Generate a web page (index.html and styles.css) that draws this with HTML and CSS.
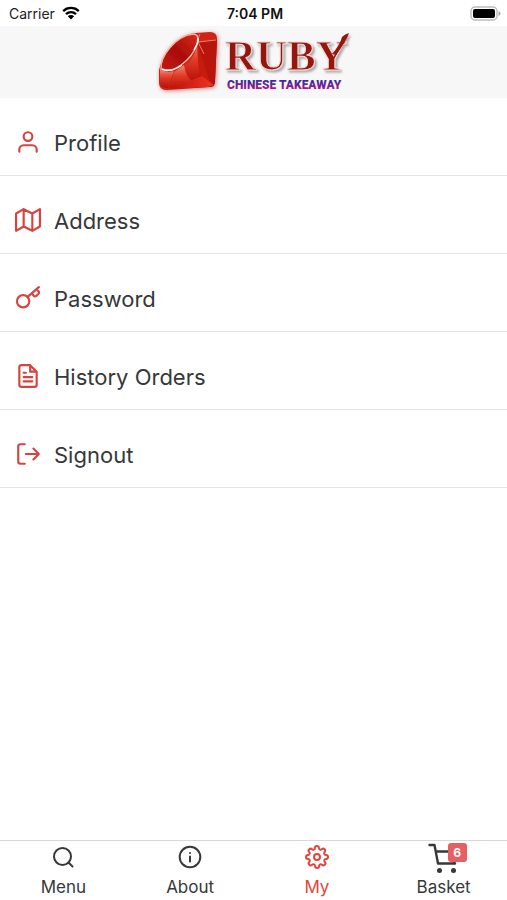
FILE: index.html
```html
<!DOCTYPE html>
<html lang="en">
<head>
<meta charset="utf-8">
<meta name="viewport" content="width=device-width, initial-scale=1">
<title>Ruby Chinese Takeaway</title>
<link rel="stylesheet" href="styles.css">
</head>
<body>
<div class="app">
  <div class="status">
    <div class="carrier">
      <span>Carrier</span>
      <svg class="wifi" viewBox="0 0 18 14" aria-hidden="true">
        <path d="M1.2 5.1a11.2 11.2 0 0 1 15.6 0M4 8.1a7.2 7.2 0 0 1 10 0" fill="none" stroke="#000" stroke-width="2.3"/>
        <path d="M5.8 10.2a4.6 4.6 0 0 1 6.4 0L9 13.6z"/>
      </svg>
    </div>
    <div class="time">7:04 PM</div>
    <svg class="battery" viewBox="0 0 31 15" aria-hidden="true">
      <rect x="1" y="1" width="26" height="13" rx="4" fill="#fff" stroke="#bcbcbc" stroke-width="1.4"/>
      <rect x="3" y="3" width="22" height="9" rx="2"/>
      <path d="M28.5 5v5q2-.8 2-2.500t-2-2.500z" fill="#aaa"/>
    </svg>
  </div>

  <header class="brand">
    <svg class="logo" viewBox="0 0 200 72" role="img" aria-label="Ruby Chinese Takeaway">
      <defs>
        <linearGradient id="side" x1="0" y1="0" x2="1" y2="1">
          <stop offset="0" stop-color="#c51a10"/><stop offset=".5" stop-color="#cf2417"/><stop offset="1" stop-color="#a00d05"/>
        </linearGradient>
        <linearGradient id="table" x1="0" y1="1" x2="1" y2="0">
          <stop offset="0" stop-color="#c5190f"/><stop offset=".5" stop-color="#a80e06"/><stop offset="1" stop-color="#dc2b1d"/>
        </linearGradient>
        <linearGradient id="facet" x1="0" y1="0" x2="0" y2="1">
          <stop offset="0" stop-color="#f78872"/><stop offset=".45" stop-color="#e03a28"/><stop offset="1" stop-color="#b80f06"/>
        </linearGradient>
        <linearGradient id="low" x1="0" y1="0" x2="1" y2="0">
          <stop offset="0" stop-color="#c01208"/><stop offset="1" stop-color="#ea3524"/>
        </linearGradient>
        <linearGradient id="tag" x1="0" y1="0" x2="0" y2="1">
          <stop offset=".2" stop-color="#3a2aa5"/><stop offset=".9" stop-color="#c3127c"/>
        </linearGradient>
        <filter id="glow" x="-20%" y="-20%" width="140%" height="140%">
          <feDropShadow dx="1" dy="1" stdDeviation="2" flood-color="#a33" flood-opacity=".6"/>
        </filter>
        <filter id="shade" x="-10%" y="-20%" width="120%" height="150%">
          <feDropShadow dx="2" dy="2" stdDeviation="1" flood-color="#777" flood-opacity=".6"/>
        </filter>
      </defs>
      <g filter="url(#glow)">
        <path d="M42 7 56 6q7 0 7 7l-2 43q0 5-5 5l-43 3q-7 0-8-6L5 44q2-9 9-19Q26 8 42 7z" fill="url(#side)"/>
        <path d="M43 16 63 14 61 54 57 59z" fill="#b81409"/>
        <path d="M43 16 57 59Q40 48 39 32z" fill="#c71a0e"/>
        <path d="M43 16Q43 30 30 40L38 56 45 50z" fill="url(#facet)"/>
        <path d="M30 39Q32 51 38 55L15 63 20 46z" fill="url(#facet)"/>
        <path d="M6 43Q12 47 20 45L14 62Q7 62 6 57z" fill="url(#facet)"/>
        <path d="M38 54 48 50 60 59 54 61 15 63z" fill="url(#low)"/>
        <path d="M44 8 57 7q5 1 5 6L45 17z" fill="#d32317"/>
        <path d="M7 43C6 31 21 10 39 8q7 0 4 10C38 34 18 49 7 43z" fill="url(#table)" stroke="#f9b3a5" stroke-width="1.400"/>
        <path d="M43 15 46 8M44 16 62 14M44 16 50 28" fill="none" stroke="#f38a79" stroke-width=".9"/>
        <path d="M44 12q1 4-4 12M8 43q9 4 20-4" fill="none" stroke="#fff" stroke-width="1.500"/>
      </g>
      <g filter="url(#shade)">
        <text class="word" x="71" y="44">RUBY</text>
        <path d="M178 28q8-9 10-17 3-3 7-4-2 7-13 22z" fill="#95130d"/>
      </g>
      <text class="tagline" x="73" y="63" fill="url(#tag)">CHINESE TAKEAWAY</text>
    </svg>
  </header>

  <main class="list">
    <a class="row" href="#profile">
      <svg class="icon" viewBox="0 0 24 24" aria-hidden="true"><path d="M20 21v-2a4 4 0 0 0-4-4H8a4 4 0 0 0-4 4v2"/><circle cx="12" cy="7" r="4"/></svg>
      <span>Profile</span>
    </a>
    <a class="row" href="#address">
      <svg class="icon" viewBox="0 0 24 24" aria-hidden="true"><path d="M1 6v16l7-4 8 4 7-4V2l-7 4-8-4zM8 2v16M16 6v16"/></svg>
      <span>Address</span>
    </a>
    <a class="row" href="#password">
      <svg class="icon" viewBox="0 0 24 24" aria-hidden="true"><circle cx="7.500" cy="15" r="5.700"/><path d="M11.700 11 22 2M15.500 7.500l1.600 2.300q1.200 1.200 2.500.2l2-1.700q1.200-1.200.2-2.400L20 4"/></svg>
      <span>Password</span>
    </a>
    <a class="row" href="#history">
      <svg class="icon" viewBox="0 0 24 24" aria-hidden="true"><path d="M14 2H6a2 2 0 0 0-2 2v16a2 2 0 0 0 2 2h12a2 2 0 0 0 2-2V8zM14 2v6h6M16 13H8M16 17H8M10 9H8"/></svg>
      <span>History Orders</span>
    </a>
    <a class="row" href="#signout">
      <svg class="icon" viewBox="0 0 24 24" aria-hidden="true"><path d="M9 21H5a2 2 0 0 1-2-2V5a2 2 0 0 1 2-2h4M17 17l5-5-5-5M22 12H10"/></svg>
      <span>Signout</span>
    </a>
  </main>

  <nav class="tabs">
    <a class="tab" href="#menu">
      <svg class="tab-icon" viewBox="0 0 24 24" aria-hidden="true"><circle cx="11.500" cy="11.500" r="8.500"/><path d="m21.500 21.500-4-4"/></svg>
      <span>Menu</span>
    </a>
    <a class="tab" href="#about">
      <svg class="tab-icon" viewBox="0 0 24 24" aria-hidden="true"><circle cx="12" cy="12" r="10.300"/><path d="M12 16.500v-5M12 8v.1"/></svg>
      <span>About</span>
    </a>
    <a class="tab active" href="#my" aria-current="page">
      <svg class="tab-icon" viewBox="0 0 24 24" aria-hidden="true"><circle cx="12" cy="12" r="3"/><path d="M19.400 15a1.650 1.650 0 0 0 .33 1.820l.06.06a2 2 0 0 1-2.830 2.830l-.06-.06a1.650 1.650 0 0 0-2.800 1.170V21a2 2 0 0 1-4 0v-.09A1.650 1.650 0 0 0 9 19.400a1.650 1.650 0 0 0-1.820.33l-.06.06a2 2 0 0 1-2.830-2.830l.06-.06A1.650 1.650 0 0 0 3.180 14.100H3a2 2 0 0 1 0-4h.09A1.650 1.650 0 0 0 4.600 9a1.650 1.650 0 0 0-.33-1.820l-.06-.06a2 2 0 0 1 2.830-2.830l.06.06A1.650 1.650 0 0 0 9.900 3.180V3a2 2 0 0 1 4 0v.09a1.650 1.650 0 0 0 2.820 1.180l.06-.06a2 2 0 0 1 2.830 2.830l-.06.06A1.650 1.650 0 0 0 20.820 9.900H21a2 2 0 0 1 0 4h-.09A1.650 1.650 0 0 0 19.400 15z"/></svg>
      <span>My</span>
    </a>
    <a class="tab" href="#basket">
      <span class="cart">
        <svg class="cart-icon" viewBox="0 0 32 32" aria-hidden="true">
          <path d="M1.500 3h5l3.500 18.500h17M8 9.500h20l-2 12" stroke-width="2.400"/>
          <circle class="wheel" cx="11.500" cy="28.500" r="2.500"/><circle class="wheel" cx="25.500" cy="28.500" r="2.500"/>
        </svg>
        <span class="badge">6</span>
      </span>
      <span>Basket</span>
    </a>
  </nav>
</div>
</body>
</html>
```
FILE: styles.css
```css
* {
  box-sizing: border-box;
}

body {
  margin: 0;
  background: #fff;
  color: #363839;
  font-family: Inter, "Liberation Sans", sans-serif;
}

a {
  color: inherit;
  text-decoration: none;
}

.app {
  display: flex;
  flex-direction: column;
  min-height: 100vh;
}

.status {
  display: grid;
  grid-template-columns: 1fr auto 1fr;
  align-items: center;
  height: 26px;
  padding: 0 6px 0 9px;
  font-size: 14px;
  color: #222;
}

.carrier {
  display: flex;
  align-items: center;
  gap: 7px;
}

.wifi {
  width: 18px;
  height: 14px;
}

.time {
  font-weight: 600;
  color: #111;
}

.battery {
  justify-self: end;
  width: 31px;
  height: 15px;
}

.brand {
  display: flex;
  justify-content: center;
  height: 72px;
  background: #f7f7f7;
}

.logo {
  width: 200px;
  height: 72px;
}

.word {
  font: bold 43px "Liberation Serif", serif;
  fill: #95130d;
  stroke: #f3dcd8;
  stroke-width: 1px;
}

.tagline {
  font: 900 12px Roboto, "Liberation Sans", sans-serif;
}

.list {
  flex: 1;
}

.row {
  display: flex;
  align-items: center;
  gap: 13px;
  height: 78px;
  padding: 12px 15px 0;
  border-bottom: 1px solid #e4e4e4;
  font-size: 22px;
}

.icon {
  width: 26px;
  height: 26px;
  margin-bottom: 2px;
}

.icon,
.tab-icon,
.cart-icon {
  flex: none;
  fill: none;
  stroke: currentColor;
  stroke-width: 2;
  stroke-linecap: round;
  stroke-linejoin: round;
}

.icon {
  color: #d5443e;
}

.tabs {
  display: grid;
  grid-template-columns: repeat(4, 1fr);
  height: 60px;
  border-top: 1px solid #d8d8d8;
}

.tab {
  display: flex;
  flex-direction: column;
  align-items: center;
  justify-content: space-between;
  padding: 4px 0 2px;
  font-size: 17px;
  line-height: 22px;
}

.active {
  color: #e4443b;
}

.tab-icon {
  width: 24px;
  height: 24px;
}

.cart {
  position: relative;
  width: 32px;
  height: 24px;
}

.cart-icon {
  display: block;
  width: 32px;
  height: 32px;
  margin-top: -3px;
}

.wheel {
  fill: currentColor;
  stroke: none;
}

.badge {
  position: absolute;
  top: -2px;
  left: 20px;
  width: 19px;
  height: 19px;
  border-radius: 3px;
  background: #e65f63;
  color: #fff;
  font-size: 12px;
  font-weight: 700;
  line-height: 19px;
  text-align: center;
}
```
